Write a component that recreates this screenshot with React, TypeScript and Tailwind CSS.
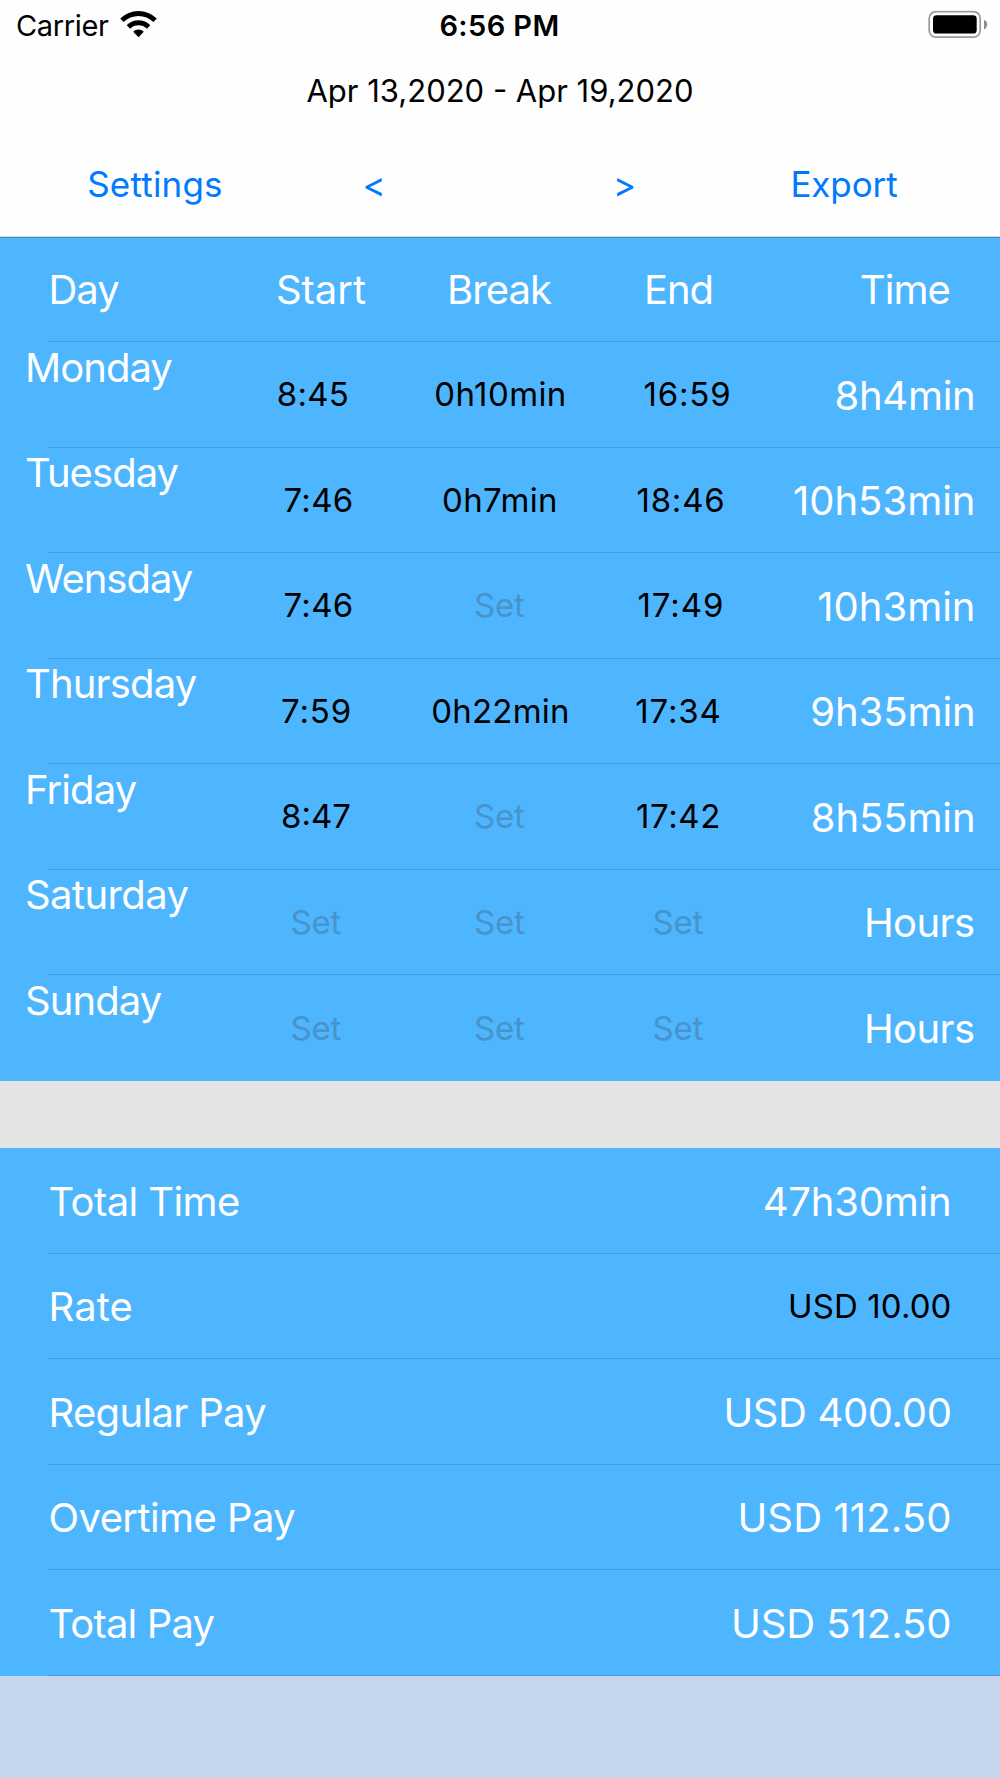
import React from "react";

type Cell = { text: string; fit?: string };
type DayRow = { day: Cell; start: Cell; pause: Cell; end: Cell; time: Cell };

const unset: Cell = { text: "Set", fit: "tracking-[-0.3px] mr-[1.5px] text-[#4794cb]" };

const days: DayRow[] = [
  {
    day: { text: "Monday", fit: "tracking-[-0.95px]" },
    start: { text: "8:45", fit: "tracking-[0.3px] mr-[7px]" },
    pause: { text: "0h10min", fit: "tracking-[0.4px] ml-px" },
    end: { text: "16:59", fit: "tracking-[0.85px] ml-[18px]" },
    time: { text: "8h4min", fit: "tracking-[-0.25px]" },
  },
  {
    day: { text: "Tuesday", fit: "tracking-[-0.95px]" },
    start: { text: "7:46", fit: "tracking-[0.3px] ml-[4px]" },
    pause: { text: "0h7min", fit: "tracking-[0.35px]" },
    end: { text: "18:46", fit: "tracking-[0.8px] ml-[5px]" },
    time: { text: "10h53min" },
  },
  {
    day: { text: "Wensday", fit: "tracking-[-1px]" },
    start: { text: "7:46", fit: "tracking-[0.3px] ml-[4px]" },
    pause: unset,
    end: { text: "17:49", fit: "tracking-[0.95px] ml-[5px]" },
    time: { text: "10h3min" },
  },
  {
    day: { text: "Thursday", fit: "tracking-[-0.84px]" },
    start: { text: "7:59", fit: "tracking-[0.85px]" },
    pause: { text: "0h22min", fit: "tracking-[0.2px] ml-px" },
    end: { text: "17:34", fit: "tracking-[0.85px]" },
    time: { text: "9h35min", fit: "tracking-[-0.1px]" },
  },
  {
    day: { text: "Friday", fit: "tracking-[-0.9px]" },
    start: { text: "8:47", fit: "mr-px" },
    pause: unset,
    end: { text: "17:42", fit: "tracking-[0.6px]" },
    time: { text: "8h55min", fit: "tracking-[-0.1px]" },
  },
  {
    day: { text: "Saturday", fit: "tracking-[-0.6px]" },
    start: unset,
    pause: unset,
    end: unset,
    time: { text: "Hours", fit: "tracking-[-0.6px] mr-px" },
  },
  {
    day: { text: "Sunday", fit: "tracking-[-0.9px]" },
    start: unset,
    pause: unset,
    end: unset,
    time: { text: "Hours", fit: "tracking-[-0.6px] mr-px" },
  },
];

const totals: { label: Cell; value: Cell; editable?: boolean }[] = [
  { label: { text: "Total Time", fit: "tracking-[-0.6px]" }, value: { text: "47h30min", fit: "tracking-[-0.2px]" } },
  { label: { text: "Rate", fit: "tracking-[0.1px]" }, value: { text: "USD 10.00", fit: "tracking-[0.1px]" }, editable: true },
  { label: { text: "Regular Pay", fit: "tracking-[-0.68px]" }, value: { text: "USD 400.00", fit: "tracking-[-0.37px]" } },
  { label: { text: "Overtime Pay", fit: "tracking-[-0.58px]" }, value: { text: "USD 112.50", fit: "tracking-[0.1px]" } },
  { label: { text: "Total Pay", fit: "tracking-[-0.85px]" }, value: { text: "USD 512.50", fit: "tracking-[-0.05px]" } },
];

function WifiIcon() {
  return (
    <svg className="ml-[11px] h-7 w-[37px] -translate-y-px" viewBox="0 0 37 28">
      <path d="M0.2 8.6A26 26 0 0 1 36.8 8.6L33.4 12A21.6 21.6 0 0 0 3.6 12Z" />
      <path d="M6.7 15.2A16.8 16.8 0 0 1 30.3 15.2L26.9 18.7A12 12 0 0 0 10.1 18.7Z" />
      <path d="M13.2 21.8A7.5 7.5 0 0 1 23.8 21.8L18.5 27.2Z" />
    </svg>
  );
}

function BatteryIcon() {
  return (
    <svg className="h-7 w-[60px] -translate-y-[0.5px]" viewBox="0 0 60 28">
      <rect x="1.2" y="1.1" width="51" height="25.6" rx="6.6" fill="none" stroke="#999" strokeWidth="1.7" />
      <rect x="5" y="4.8" width="43.7" height="18.2" rx="3.6" />
      <path d="M56 9.2Q59.2 10.6 59.2 13.9T56 18.9Z" fill="#8c8c8c" />
    </svg>
  );
}

function TimeButton({ cell }: { cell: Cell }) {
  return (
    <div className="flex items-center justify-center pt-px text-[33px] text-black">
      <button className={cell.fit}>{cell.text}</button>
    </div>
  );
}

function Separator() {
  return <div className="ml-12 h-px shrink-0 bg-[#479edf]" />;
}

export default function App() {
  return (
    <div className="flex h-[1778px] w-[1000px] flex-col overflow-hidden bg-[#c5d5eb] font-['Inter',sans-serif] whitespace-nowrap text-black">
      <header className="flex h-[236.9px] shrink-0 flex-col border-b border-[#dcdcdc] bg-[#fefefe]">
        <div className="grid h-[50px] grid-cols-3 items-center text-[29px] leading-none">
          <div className="flex items-center pl-4">
            <span className="tracking-[-0.35px]">Carrier</span>
            <WifiIcon />
          </div>
          <div className="pr-px text-center font-semibold tracking-[0.4px]">6:56 PM</div>
          <div className="flex justify-end pr-[12px]">
            <BatteryIcon />
          </div>
        </div>
        <div className="flex h-20 items-center justify-center pt-[2px] text-[31px]">Apr 13,2020 - Apr 19,2020</div>
        <nav className="grid flex-1 grid-cols-4 items-center pt-[3px] text-center text-[35px] text-[#007aff]">
          <button className="pl-[60px] tracking-[0.2px]">Settings</button>
          <button className="pr-[2px]">&lt;</button>
          <button className="pr-px">&gt;</button>
          <button className="pr-[62px] tracking-[-0.1px]">Export</button>
        </nav>
      </header>

      <section className="shrink-0 bg-[#4eb5ff] text-[40px] text-white">
        <div className="flex h-[105.5px] flex-col border-t border-[#4289bf]">
          <div className="grid flex-1 grid-cols-[225px_183px_184px_173px_235px] items-center pt-px text-center">
            <span className="pl-[48.5px] text-left tracking-[-1px]">Day</span>
            <span className="pl-[9px]">Start</span>
            <span className="pr-[2px] tracking-[-0.9px]">Break</span>
            <span className="tracking-[-1px]">End</span>
            <span className="pr-[50px] text-right tracking-[-0.9px]">Time</span>
          </div>
          <Separator />
        </div>
        {days.map((row, i) => (
          <div key={row.day.text} className="flex h-[105.5px] flex-col">
            <div className="grid flex-1 grid-cols-[225px_183px_184px_173px_235px]">
              <div className="pt-[1.6px] pl-[25px] leading-[48px]">
                <span className={row.day.fit}>{row.day.text}</span>
              </div>
              <TimeButton cell={row.start} />
              <TimeButton cell={row.pause} />
              <TimeButton cell={row.end} />
              <div className="flex items-center justify-end pt-[2px] pr-[24.5px]">
                <span className={row.time.fit}>{row.time.text}</span>
              </div>
            </div>
            {i < days.length - 1 && <Separator />}
          </div>
        ))}
      </section>

      <div className="h-[67.55px] shrink-0 bg-[#e4e4e4]" />

      <section className="shrink-0 bg-[#4eb5ff] text-[40px] text-white">
        {totals.map(({ label, value, editable }) => (
          <div key={label.text} className="flex h-[105.5px] flex-col">
            <div className="flex flex-1 items-center justify-between pt-[2px] pr-[48.5px] pl-[48.5px]">
              <span className={label.fit}>{label.text}</span>
              {editable ? (
                <button className={`text-[33px] text-black ${value.fit}`}>{value.text}</button>
              ) : (
                <span className={value.fit}>{value.text}</span>
              )}
            </div>
            <Separator />
          </div>
        ))}
      </section>
    </div>
  );
}
